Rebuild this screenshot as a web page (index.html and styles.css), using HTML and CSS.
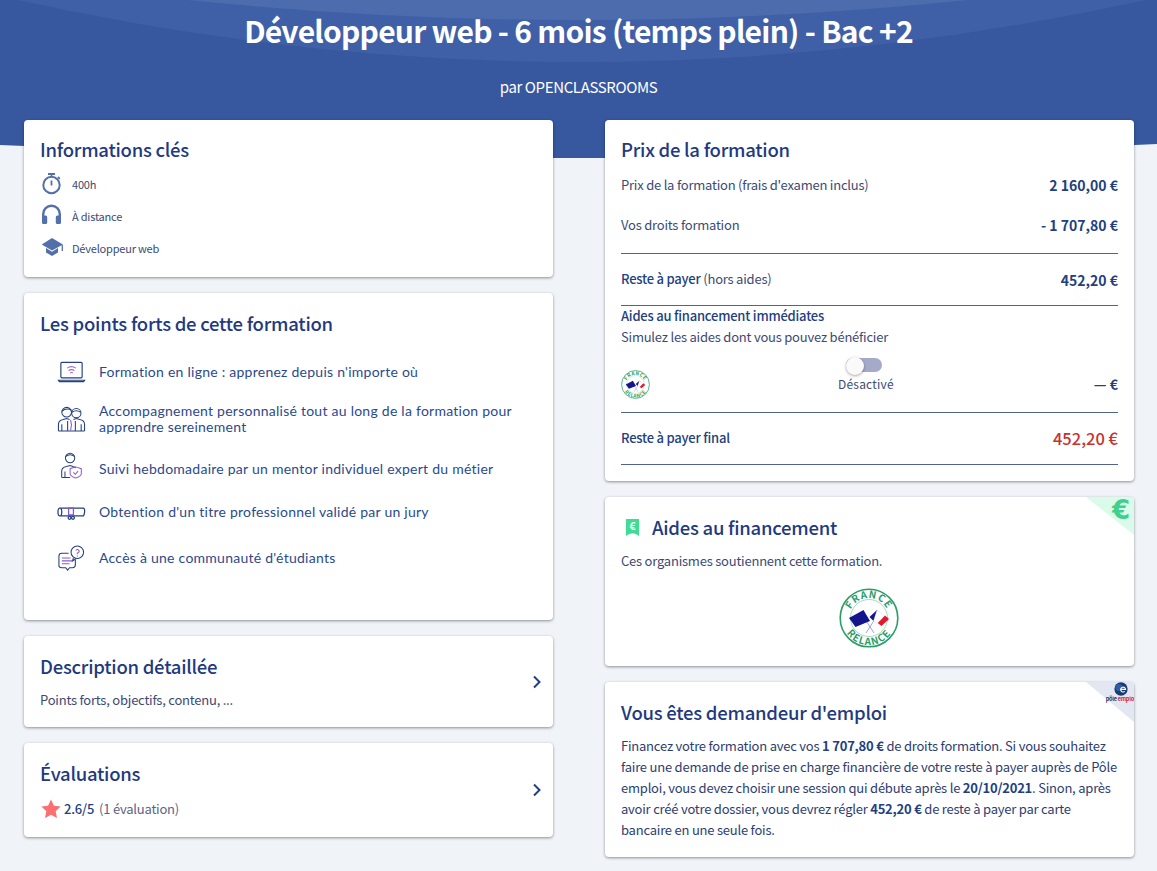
FILE: index.html
```html
<!DOCTYPE html>
<html lang="fr">
<head>
<meta charset="utf-8">
<title>Développeur web</title>
<link rel="stylesheet" href="styles.css">
</head>
<body>
<header class="hero">
  <svg class="hero-bg" viewBox="0 0 1157 158" preserveAspectRatio="none" aria-hidden="true">
    <path d="M0 0H1157V144Q578 172 0 145Z" fill="#37589f"/>
    <path d="M18 0Q578 124 1146 0Z" fill="#3f60a6"/>
    <path d="M188 0Q578 40 969 0Z" fill="#4d6cae"/>
  </svg>
  <h1 class="hero-title">Développeur web - 6 mois (temps plein) - Bac +2</h1>
  <p class="hero-sub">par OPENCLASSROOMS</p>
</header>
<main class="columns">
  <div class="col">
    <section class="card card-info">
      <h2>Informations clés</h2>
      <ul class="facts">
        <li><svg class="fact-icon" viewBox="0 0 24 24"><path d="M8 2h7" stroke="#5470ab" stroke-width="2.200" fill="none"/><path d="M11.500 3v2" stroke="#5470ab" stroke-width="1.600" fill="none"/><circle cx="11.500" cy="13" r="8.200" fill="none" stroke="#5470ab" stroke-width="2"/><path d="M11.500 8.500v5M18 5l1.800 1.800" stroke="#5470ab" stroke-width="1.800" fill="none"/></svg>400h</li>
        <li><svg class="fact-icon" viewBox="0 0 24 24"><path d="M3.200 15v-5a8.300 8.300 0 0 1 16.600 0v5" fill="none" stroke="#5470ab" stroke-width="2.400"/><rect x="2" y="11.500" width="5.200" height="8.500" rx="1.500" fill="#5470ab"/><rect x="15.800" y="11.500" width="5.200" height="8.500" rx="1.500" fill="#5470ab"/></svg>À distance</li>
        <li><svg class="fact-icon" viewBox="0 0 24 24"><path d="M12 2L1.700 8.500 12 14.500 23 8.500z" fill="#5470ab"/><path d="M6 12v4.500L12 20l6-3.500V12l-6 3.700z" fill="#5470ab"/><path d="M22.300 9v6" stroke="#5470ab" stroke-width="1.300"/></svg>Développeur web</li>
      </ul>
    </section>
    <section class="card card-strong">
      <h2>Les points forts de cette formation</h2>
      <ul class="strengths">
        <li>
          <svg class="strength-icon" viewBox="0 0 30 24" fill="none" stroke="#24407f" stroke-width="1.200"><rect x="4" y="2" width="22" height="16" rx="1"/><path d="M1.500 20.500h27l-1 1.500h-25z"/><path d="M10.500 8q4.500-3 9 0M12 10.500q3-2 6 0M13.500 13q1.500-1 3 0" stroke="#9a6ad6"/></svg>
          <span>Formation en ligne : apprenez depuis n'importe où</span>
        </li>
        <li>
          <svg class="strength-icon" viewBox="0 0 30 28" fill="none" stroke="#24407f" stroke-width="1.100"><circle cx="10" cy="7" r="5"/><circle cx="20" cy="8" r="4.800"/><path d="M5 6q5-4 10-1M15.500 7q4.500-3 9 0"/><path d="M1.500 26.500v-7q0-4 5-5l3.500-1 3 1M28.500 26.500v-7q0-4-5-5l-3.500-1-3 1M5 26.500v-7M25 26.500v-7M1.500 26.500h27M11 16v10M19 16v10"/><path d="M14 15l1 5-1 6" stroke="#8a5bd0"/></svg>
          <span>Accompagnement personnalisé tout au long de la formation pour apprendre sereinement</span>
        </li>
        <li>
          <svg class="strength-icon strength-icon-mentor" viewBox="2 0 25 30" fill="none" stroke="#24407f" stroke-width="1.100"><circle cx="13" cy="7.500" r="5"/><path d="M8 6q5-4 10 0"/><path d="M4 28.500v-7q0-4 5-5l4-1 3 1q2 .5 3 1.500M4 28.500h9M7.500 22v6"/><path d="M19 17l6 2v5q0 3-6 5-6-2-6-5v-5z" stroke="#8a5bd0"/><path d="M16.500 23l2 2 3-3.500" stroke="#8a5bd0"/></svg>
          <span>Suivi hebdomadaire par un mentor individuel expert du métier</span>
        </li>
        <li>
          <svg class="strength-icon strength-icon-diploma" viewBox="0 0 30 16" fill="none" stroke="#24407f" stroke-width="1.300"><path d="M3 2h24q2 0 1.500 4-.5 4-1.500 4H3Q1 10 1 6t2-4z"/><path d="M4 2q2 4 0 8"/><path d="M12 2h5v7h-5z" stroke="#7d59c8"/><circle cx="13" cy="12" r="1.500"/><circle cx="16.500" cy="12" r="1.500"/></svg>
          <span>Obtention d'un titre professionnel validé par un jury</span>
        </li>
        <li>
          <svg class="strength-icon" viewBox="0 0 30 28" fill="none" stroke="#24407f" stroke-width="1.100"><circle cx="21" cy="8" r="6.500"/><path d="M17 14l-1 3 4-2.500"/><path d="M12 9H5q-3 0-3 3v10q0 2 3 2h4l2 2.500 2-2.500h3q3 0 3-3v-5"/><path d="M5 14h9M5 17h11M5 20h8" stroke="#8a5bd0"/><path d="M19.500 6q1.500-1.500 3 0t-1.500 3v1M21 11.500v1" stroke="#8a5bd0"/></svg>
          <span>Accès à une communauté d'étudiants</span>
        </li>
      </ul>
    </section>
    <section class="card card-link card-desc">
      <div>
        <h2>Description détaillée</h2>
        <p class="link-sub">Points forts, objectifs, contenu, ...</p>
      </div>
      <svg class="chevron" viewBox="0 0 10 14"><path d="M2 1.500L7.500 7 2 12.500" fill="none" stroke="#233f80" stroke-width="2"/></svg>
    </section>
    <section class="card card-link card-eval">
      <div>
        <h2>Évaluations</h2>
        <p class="rating"><svg class="star" viewBox="0 0 24 24"><path d="M12 1.500l3.200 6.900 7.300.9-5.400 5.100 1.400 7.500L12 18.200l-6.500 3.700 1.400-7.500L1.500 9.300l7.300-.9z" fill="#fa7070"/></svg><strong>2.6/5</strong><span>(1 évaluation)</span></p>
      </div>
      <svg class="chevron" viewBox="0 0 10 14"><path d="M2 1.500L7.500 7 2 12.500" fill="none" stroke="#233f80" stroke-width="2"/></svg>
    </section>
  </div>
  <div class="col">
    <section class="card card-price">
      <h2>Prix de la formation</h2>
      <div class="row row-first"><span>Prix de la formation (frais d'examen inclus)</span><b>2 160,00 €</b></div>
      <div class="row row-second"><span>Vos droits formation</span><b>- 1 707,80 €</b></div>
      <div class="row row-rest"><span><em>Reste à payer</em> (hors aides)</span><b>452,20 €</b></div>
      <div class="aid-block">
        <p class="aid-title">Aides au financement immédiates</p>
        <p class="aid-text">Simulez les aides dont vous pouvez bénéficier</p>
        <div class="aid-row">
          <svg class="relance relance-small" viewBox="0 0 60 60">
            <use href="#relance-logo"/>
          </svg>
          <div class="toggle-wrap">
            <span class="toggle"><span class="knob"></span></span>
            <span class="toggle-label">Désactivé</span>
          </div>
          <b>— €</b>
        </div>
      </div>
      <div class="row row-final"><em>Reste à payer final</em><b class="total">452,20 €</b></div>
    </section>
    <section class="card card-aid">
      <span class="corner corner-green"></span>
      <span class="corner-euro">€</span>
      <h2 class="aid-heading">
        <svg class="ribbon" viewBox="0 0 16 18"><path d="M1 0h14v18q-3.500-3-7-3t-7 3z" fill="#3fdc94"/><text x="8" y="11.500" text-anchor="middle" class="ribbon-euro">€</text></svg>
        Aides au financement
      </h2>
      <p class="aid-lead">Ces organismes soutiennent cette formation.</p>
      <svg class="relance relance-big" viewBox="0 0 60 60">
        <g id="relance-logo">
          <circle cx="30" cy="30" r="28.800" fill="#fff" stroke="#2a9d68" stroke-width="1.600"/>
          <circle cx="30" cy="30" r="18.500" fill="none" stroke="#2a9d68" stroke-width=".4"/>
          <path id="arc-top" d="M10 30a20 20 0 0 1 40 0" fill="none"/>
          <path id="arc-bottom" d="M3 30a27 27 0 0 0 54 0" fill="none"/>
          <text class="relance-text"><textPath href="#arc-top" startOffset="50%" text-anchor="middle">FRANCE</textPath></text>
          <text class="relance-text"><textPath href="#arc-bottom" startOffset="50%" text-anchor="middle">RELANCE</textPath></text>
          <path d="M26 31L35 45M36 31L27 45" stroke="#8c8ccc" stroke-width=".8"/>
          <path d="M10 30L24.500 22 31 33 16.500 39z" fill="#14148c"/>
          <path d="M30.500 29L38 22 42 25.500 34.500 33z" fill="#14148c"/>
          <path d="M38 22L46.500 28 42.500 38 34.500 33z" fill="#fff" stroke="#d8d8e8" stroke-width=".3"/>
          <path d="M46 27.500L50 31 42.500 38 38.800 35z" fill="#e2192c"/>
        </g>
      </svg>
    </section>
    <section class="card card-job">
      <span class="corner corner-grey"></span>
      <span class="pole-logo">
        <svg class="pole-globe" viewBox="0 0 20 20"><circle cx="10" cy="10" r="9.500" fill="#1d3a70"/><circle cx="7" cy="8" r="5" fill="#2c5fa8"/><path d="M10 10.500h6.500a3.500 3.500 0 1 0-1.200 3" fill="none" stroke="#fff" stroke-width="1.600"/></svg>
        <span class="pole-text">pôle <i>emploi</i></span>
      </span>
      <h2>Vous êtes demandeur d'emploi</h2>
      <p class="job-text">Financez votre formation avec vos <b>1 707,80 €</b> de droits formation. Si vous souhaitez faire une demande de prise en charge financière de votre reste à payer auprès de Pôle emploi, vous devez choisir une session qui débute après le <b>20/10/2021</b>. Sinon, après avoir créé votre dossier, vous devrez régler <b>452,20 €</b> de reste à payer par carte bancaire en une seule fois.</p>
    </section>
  </div>
</main>
</body>
</html>
```

FILE: styles.css
```css
* { box-sizing: border-box; }
html, body { margin: 0; padding: 0; }
body {
  background: #f0f4f9;
  color: #233f80;
  font-family: "Noto Sans CJK SC", "Noto Sans", sans-serif;
  font-size: 13px;
  letter-spacing: -.22px;
}
h1, h2, p, ul { margin: 0; padding: 0; }
ul { list-style: none; }
em { font-style: normal; }

.hero {
  position: relative;
  height: 158px;
  padding-top: 9px;
  text-align: center;
  color: #fff;
}
.hero-bg {
  position: absolute;
  inset: 0;
  width: 100%;
  height: 100%;
  z-index: -1;
}
.hero-title { font-size: 30px; line-height: 42px; font-weight: 700; letter-spacing: -.75px; }
.hero-sub { margin-top: 25px; font-size: 15px; line-height: 22px; letter-spacing: -.38px; }

.columns {
  display: grid;
  grid-template-columns: 529px 529px;
  justify-content: space-between;
  padding: 0 23px 14px 24px;
  margin-top: -38px;
}
.col { display: flex; flex-direction: column; gap: 16px; }

.card {
  position: relative;
  overflow: hidden;
  background: #fff;
  border-radius: 4px;
  box-shadow: 0 1px 3px rgba(0, 0, 0, .42);
  padding: 16px;
}
.card h2 { font-size: 18.500px; line-height: 27px; font-weight: 500; letter-spacing: -.25px; color: #1f3a80; }

.card-info { height: 157px; }
.facts { margin-top: 5px; }
.facts li { display: flex; align-items: center; gap: 8px; height: 32px; font-size: 11px; letter-spacing: -.2px; color: #3d4a73; }
.fact-icon { width: 24px; height: 24px; flex: none; }

.card-strong { height: 327px; padding-top: 17px; }
.strengths { margin-top: 19px; display: flex; flex-direction: column; }
.strengths li {
  display: flex;
  align-items: center;
  gap: 13px;
  margin-left: 17px;
  height: 32px;
  font-family: "Lato", sans-serif;
  font-size: 14px;
  line-height: 16px;
  letter-spacing: .25px;
  color: #2b4a8c;
}
.strengths li:nth-child(2) { height: 48px; margin-top: 7px; }
.strengths li:nth-child(3) { margin-top: 10px; }
.strengths li:nth-child(4) { margin-top: 11px; }
.strengths li:nth-child(5) { margin-top: 14px; }
.strength-icon { width: 29px; height: 28px; flex: none; }
.strength-icon-mentor { margin-top: -8px; }
.strength-icon-diploma { margin-top: 4px; }

.card-link { display: flex; align-items: center; justify-content: space-between; padding-right: 11px; }
.card-desc { height: 91px; }
.card-eval { height: 94px; }
.link-sub { margin-top: 10px; line-height: 20px; color: #3d4a73; }
.chevron { width: 10px; height: 14px; flex: none; }
.rating { display: flex; align-items: center; margin-top: 11px; padding-bottom: 1px; line-height: 22px; color: #5a6488; }
.rating strong { margin: 0 5px 0 2px; font-weight: 500; color: #233f80; }
.star { width: 22px; height: 22px; }

.card-price { height: 361px; }
.row { display: flex; justify-content: space-between; align-items: center; color: #3d4a73; }
.row > span, .row > em { padding-bottom: 2px; }
.row b { font-size: 14px; font-weight: 700; letter-spacing: 0; color: #233f80; }
.row em { font-weight: 500; color: #233f80; }
.row-first { margin-top: 11px; height: 22px; }
.row-second { margin-top: 18px; height: 22px; }
.row-rest { margin-top: 17px; height: 53px; border-top: 1px solid #51648f; border-bottom: 1px solid #51648f; }
.aid-block { margin-top: -1px; }
.aid-title { font-weight: 500; line-height: 21px; color: #233f80; }
.aid-text { line-height: 21px; color: #3d4a73; }
.aid-row { display: flex; align-items: center; justify-content: space-between; height: 65px; padding-top: 9px; }
.aid-row b { font-size: 14px; font-weight: 700; letter-spacing: 0; }
.relance-small { width: 29px; height: 29px; }
.toggle-wrap { display: flex; flex-direction: column; align-items: center; gap: 4px; align-self: flex-start; margin: 2px 12px 0 0; font-size: 12px; color: #3d4a73; }
.toggle-label { line-height: 16px; letter-spacing: .2px; }
.toggle { position: relative; display: block; width: 36px; height: 14px; margin-right: 4px; border-radius: 7px; background: #a4aac8; }
.knob { position: absolute; left: 0; top: -1px; width: 18px; height: 18px; border-radius: 50%; background: #fafafa; box-shadow: 0 1px 3px rgba(0, 0, 0, .35); }
.row-final { height: 53px; border-top: 1px solid #51648f; border-bottom: 1px solid #51648f; }
.row-final .total { padding-bottom: 2px; font-size: 16.500px; font-weight: 500; color: #c8322e; }

.card-aid { height: 169px; overflow: visible; }
.card .aid-heading { display: flex; align-items: center; gap: 12px; margin: 1px 0 0 4px; font-size: 18.500px; }
.ribbon { width: 15px; height: 17px; flex: none; }
.ribbon-euro { font-size: 11px; font-weight: 700; fill: #fff; }
.aid-lead { margin-top: 10px; line-height: 20px; color: #3d4a73; }
.relance-big { display: block; width: 60px; height: 60px; margin: 17px 0 0 218px; }
.relance-text { font-size: 10px; font-weight: 700; letter-spacing: 1px; fill: #2a9d68; }

.corner { position: absolute; top: 0; right: 0; width: 0; height: 0; border-style: solid; }
.corner-green { border-width: 0 48px 38px 0; border-color: transparent #dafbea transparent transparent; border-top-right-radius: 4px; }
.corner-euro { position: absolute; top: 0; right: 4px; font-family: "DejaVu Sans", sans-serif; font-size: 26px; font-weight: 700; line-height: 26px; letter-spacing: 0; color: #3fd08e; }
.corner-grey { border-width: 0 48px 40px 0; border-color: transparent #e3e7f2 transparent transparent; }
.pole-logo { position: absolute; top: 0; right: 0; width: 27px; display: flex; flex-direction: column; align-items: center; }
.pole-globe { width: 14px; height: 14px; }
.pole-text { font-size: 5.500px; line-height: 6px; font-weight: 700; color: #1d3a70; white-space: nowrap; }
.pole-text i { font-style: normal; color: #d4213d; }

.card-job { height: 175px; padding-top: 17px; }
.job-text { margin-top: 9px; line-height: 21px; color: #2e3d70; }
.job-text b { font-weight: 700; color: #233f80; }
```
